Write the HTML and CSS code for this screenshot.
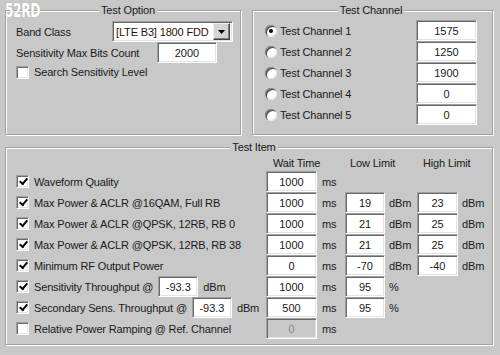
FILE: index.html
```html
<!DOCTYPE html>
<html>
<head>
<meta charset="utf-8">
<link rel="stylesheet" href="styles.css">
</head>
<body>
<div class="app">
  <div class="logo">52RD</div>
  <div class="top">
    <fieldset class="group option">
      <legend>Test Option</legend>
      <div class="opt-row">
        <span class="lbl band-lbl">Band Class</span>
        <div class="combo">
          <span class="combo-text">[LTE B3] 1800 FDD</span>
          <span class="combo-btn"><svg width="7" height="4" viewBox="0 0 7 4"><path d="M0 0H7L3.5 4Z" fill="#000"/></svg></span>
        </div>
      </div>
      <div class="opt-row">
        <span class="lbl bits-lbl">Sensitivity Max Bits Count</span>
        <input class="field bits" type="text" value="2000">
      </div>
      <div class="opt-row chk-row">
        <span class="chk"></span>
        <span>Search Sensitivity Level</span>
      </div>
    </fieldset>
    <fieldset class="group channel">
      <legend>Test Channel</legend>
      <div class="ch-row"><span class="radio on"></span><span class="ch-lbl">Test Channel 1</span><input class="field ch" type="text" value="1575"></div>
      <div class="ch-row"><span class="radio"></span><span class="ch-lbl">Test Channel 2</span><input class="field ch" type="text" value="1250"></div>
      <div class="ch-row"><span class="radio"></span><span class="ch-lbl">Test Channel 3</span><input class="field ch" type="text" value="1900"></div>
      <div class="ch-row"><span class="radio"></span><span class="ch-lbl">Test Channel 4</span><input class="field ch" type="text" value="0"></div>
      <div class="ch-row"><span class="radio"></span><span class="ch-lbl">Test Channel 5</span><input class="field ch" type="text" value="0"></div>
    </fieldset>
  </div>
  <fieldset class="group items">
    <legend>Test Item</legend>
    <div class="item-head">
      <span class="h-wait">Wait Time</span>
      <span class="h-low">Low Limit</span>
      <span class="h-high">High Limit</span>
    </div>
    <div class="item-row">
      <div class="item-lbl"><span class="chk checked"></span><span>Waveform Quality</span></div>
      <input class="field" type="text" value="1000"><span class="unit">ms</span>
    </div>
    <div class="item-row">
      <div class="item-lbl"><span class="chk checked"></span><span>Max Power &amp; ACLR @16QAM, Full RB</span></div>
      <input class="field" type="text" value="1000"><span class="unit">ms</span>
      <input class="field" type="text" value="19"><span class="unit">dBm</span>
      <input class="field" type="text" value="23"><span class="unit">dBm</span>
    </div>
    <div class="item-row">
      <div class="item-lbl"><span class="chk checked"></span><span>Max Power &amp; ACLR @QPSK, 12RB, RB 0</span></div>
      <input class="field" type="text" value="1000"><span class="unit">ms</span>
      <input class="field" type="text" value="21"><span class="unit">dBm</span>
      <input class="field" type="text" value="25"><span class="unit">dBm</span>
    </div>
    <div class="item-row">
      <div class="item-lbl"><span class="chk checked"></span><span>Max Power &amp; ACLR @QPSK, 12RB, RB 38</span></div>
      <input class="field" type="text" value="1000"><span class="unit">ms</span>
      <input class="field" type="text" value="21"><span class="unit">dBm</span>
      <input class="field" type="text" value="25"><span class="unit">dBm</span>
    </div>
    <div class="item-row">
      <div class="item-lbl"><span class="chk checked"></span><span>Minimum RF Output Power</span></div>
      <input class="field" type="text" value="0"><span class="unit">ms</span>
      <input class="field" type="text" value="-70"><span class="unit">dBm</span>
      <input class="field" type="text" value="-40"><span class="unit">dBm</span>
    </div>
    <div class="item-row">
      <div class="item-lbl"><span class="chk checked"></span><span>Sensitivity Throughput @</span><input class="field inline" type="text" value="-93.3"><span class="inline-unit">dBm</span></div>
      <input class="field" type="text" value="1000"><span class="unit">ms</span>
      <input class="field" type="text" value="95"><span class="unit">%</span>
    </div>
    <div class="item-row">
      <div class="item-lbl"><span class="chk checked"></span><span>Secondary Sens. Throughput @</span><input class="field inline" type="text" value="-93.3"><span class="inline-unit">dBm</span></div>
      <input class="field" type="text" value="500"><span class="unit">ms</span>
      <input class="field" type="text" value="95"><span class="unit">%</span>
    </div>
    <div class="item-row">
      <div class="item-lbl"><span class="chk"></span><span>Relative Power Ramping @ Ref. Channel</span></div>
      <input class="field" type="text" value="0" disabled><span class="unit">ms</span>
    </div>
  </fieldset>
</div>
</body>
</html>
```
FILE: styles.css
```css
* { box-sizing: border-box; }
html, body { margin: 0; }
body {
  background: #c8c8c8;
  font: 11px/14px "Liberation Sans", Arial, sans-serif;
  letter-spacing: -0.15px;
  color: #1a1a1a;
}
.app {
  position: relative;
  width: 500px;
  height: 355px;
  padding: 3px 0 0 5px;
}
.logo {
  position: absolute;
  left: 5px;
  top: 2px;
  font-family: "DejaVu Sans Condensed", "DejaVu Sans", sans-serif;
  font-weight: bold;
  font-size: 17px;
  line-height: 16px;
  color: #fff;
  letter-spacing: -0.5px;
  transform: scale(0.8, 1.1);
  transform-origin: left top;
  text-shadow: 0 0 1px #9a9a9a;
  z-index: 2;
}
.top { display: flex; gap: 11px; }
.group {
  margin: 0;
  min-width: 0;
  border: 1px solid #a0a0a0;
  box-shadow: inset 1px 1px #fff, 1px 1px #fff;
}
.group > legend {
  margin: 0 auto;
  padding: 0 2px;
  line-height: 14px;
  background: #c8c8c8;
}
.option { width: 236px; height: 132px; padding: 4px 0 0 10px; }
.channel { width: 241px; height: 132px; padding: 3px 15px 0 12px; }
.items { width: 488px; height: 205px; margin-top: 5px; padding: 0 0 0 10px; }

.field {
  display: block;
  margin: 0;
  padding: 0;
  height: 21px;
  font: inherit;
  color: #1a1a1a;
  text-align: center;
  background: #fff;
  border: 1px solid;
  border-color: #a0a0a0 #fff #fff #a0a0a0;
  box-shadow: inset 1px 1px #696969, inset -1px -1px #e3e3e3;
  outline: none;
}
.field:disabled { background: #c8c8c8; color: #8a8a8a; }

.opt-row { display: flex; align-items: center; height: 21px; }
.band-lbl { width: 96px; }
.bits-lbl { width: 141px; }
.chk-row { height: 18px; }
.combo {
  position: relative;
  width: 121px;
  height: 21px;
  background: #fff;
  border: 1px solid;
  border-color: #a0a0a0 #fff #fff #a0a0a0;
  box-shadow: inset 1px 1px #696969, inset -1px -1px #e3e3e3;
  display: flex;
  align-items: center;
  padding: 0 2px 0 3px;
}
.combo-text { flex: 1; color: #2a1208; white-space: nowrap; }
.combo-btn {
  width: 17px;
  height: 17px;
  background: #d4d4d4;
  border: 1px solid;
  border-color: #f0f0f0 #404040 #404040 #f0f0f0;
  box-shadow: inset -1px -1px #808080;
  display: flex;
  align-items: center;
  justify-content: center;
}
.combo-btn svg { display: block; }
.bits { width: 60px; }

.chk {
  flex: none;
  position: relative;
  width: 13px;
  height: 13px;
  margin-right: 5px;
  background: #fff;
  border: 1px solid;
  border-color: #a0a0a0 #fff #fff #a0a0a0;
  box-shadow: inset 1px 1px #696969, inset -1px -1px #e3e3e3;
}
.chk.checked::after {
  content: "";
  position: absolute;
  left: 2px;
  top: 1px;
  width: 6px;
  height: 3px;
  border-left: 2px solid #000;
  border-bottom: 2px solid #000;
  transform: translate(0.5px, 1px) rotate(-50deg);
  transform-origin: center;
}

.ch-row { display: flex; align-items: center; height: 21px; }
.radio {
  flex: none;
  position: relative;
  width: 12px;
  height: 12px;
  border-radius: 50%;
  background: #fff;
  box-shadow: inset 1px 1px #8a8a8a, inset 2px 2px #505050, inset -1px -1px #e6e6e6;
}
.radio.on::after {
  content: "";
  position: absolute;
  left: 4px;
  top: 4px;
  width: 4px;
  height: 4px;
  border-radius: 50%;
  background: #000;
}
.ch-lbl { margin-left: 3px; }
.ch { width: 61px; margin-left: auto; }

.item-head, .item-row {
  display: grid;
  grid-template-columns: 250px 51px 28px 40px 32px 41px auto;
  align-items: center;
}
.item-head { height: 17px; }
.item-row { height: 21px; }
.h-wait { grid-column: 2 / 4; padding-left: 7px; }
.h-low { grid-column: 4 / 6; padding-left: 5px; }
.h-high { grid-column: 6 / 8; padding-left: 6px; }
.item-lbl { display: flex; align-items: center; white-space: nowrap; }
.unit { padding-left: 5px; }
.item-row .unit:nth-of-type(n+2) { padding-left: 4px; }
.inline { width: 40px; margin-left: 5px; }
.inline-unit { margin-left: 5px; }
```
